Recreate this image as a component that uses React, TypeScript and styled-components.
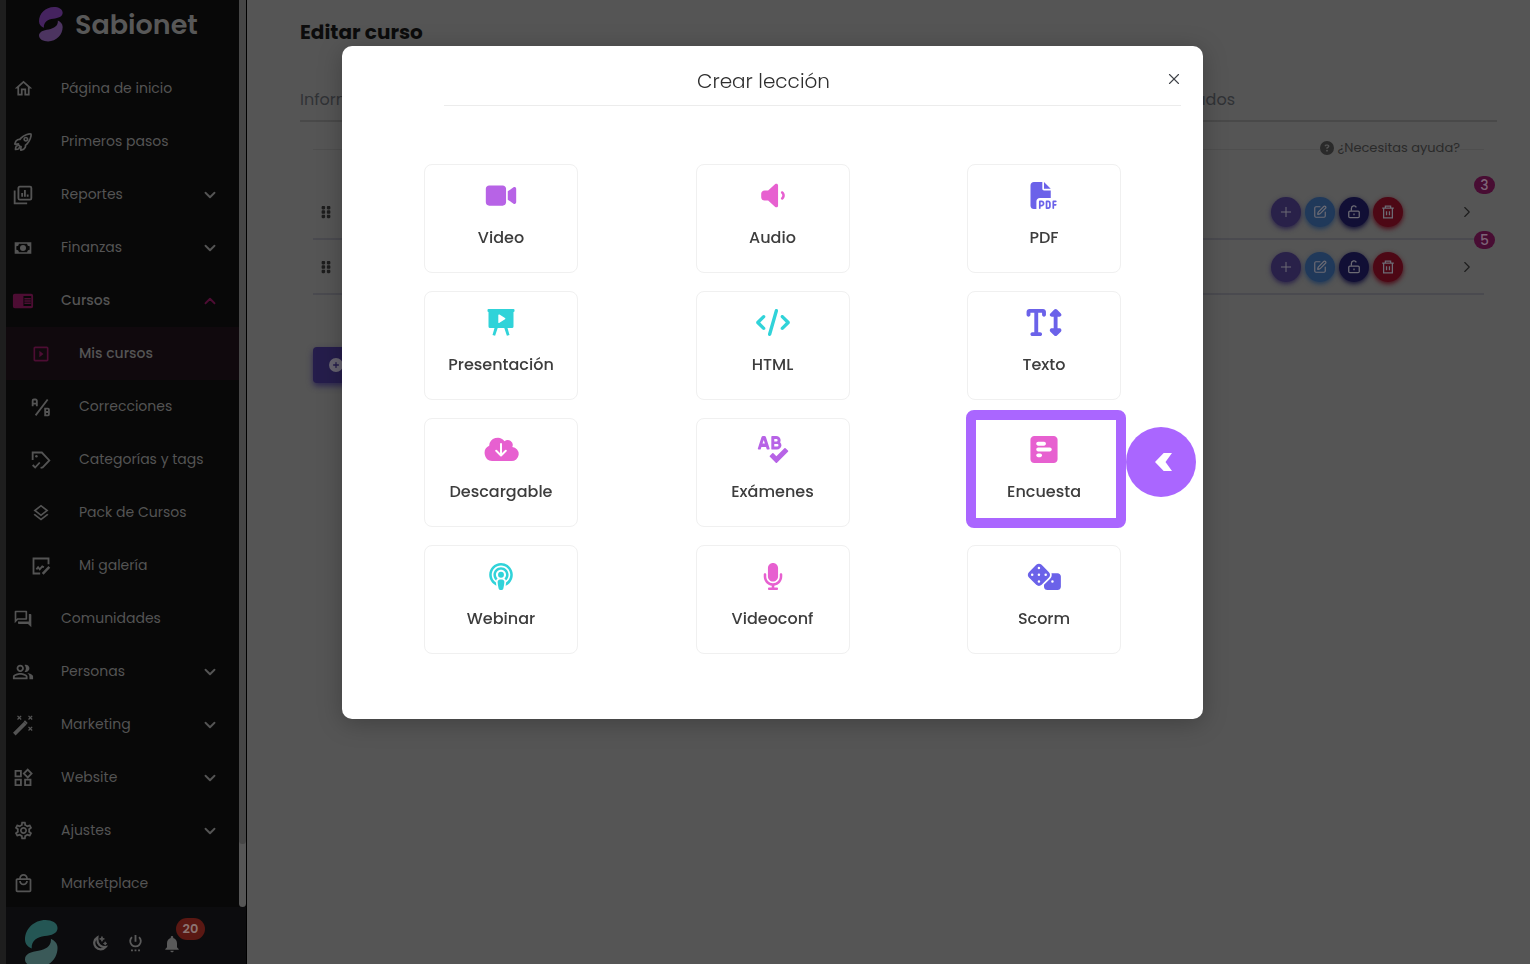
import React from 'react';
import styled, { createGlobalStyle } from 'styled-components';
import {
  MdOutlineHome, MdOutlineSlideshow, MdOutlineLayers, MdOutlineForum, MdOutlinePeopleAlt,
  MdOutlineSettings, MdOutlineLocalMall, MdNotifications,
} from 'react-icons/md';
import { IoRocketOutline } from 'react-icons/io5';
import { FaSpellCheck } from 'react-icons/fa';
import {
  FaVideo, FaVolumeLow, FaFilePdf, FaCode, FaTextHeight, FaSquarePollHorizontal,
  FaPodcast, FaMicrophone, FaDice, FaCircleQuestion, FaCirclePlus, FaGripVertical,
} from 'react-icons/fa6';
import { ChevronDown, ChevronUp, ChevronRight, X, Plus, SquarePen } from 'lucide-react';

const GlobalStyle = createGlobalStyle`
  * { box-sizing: border-box; }
  body {
    margin: 0;
    background: #555555;
    font-family: Poppins, Inter, "Liberation Sans", sans-serif;
    overflow: hidden;
  }
  button { font: inherit; color: inherit; cursor: pointer; }
  a { color: inherit; text-decoration: none; }
  ul { list-style: none; margin: 0; padding: 0; }
`;

/* ---------- drawn icons ---------- */

type IconProps = { size?: number };

const Line = ({ size = 20, children }: IconProps & { children: React.ReactNode }) => (
  <svg width={size} height={size} viewBox="0 0 24 24" fill="none" stroke="currentColor" strokeWidth="2.2" aria-hidden="true">
    {children}
  </svg>
);

const ReportsIcon = () => (
  <Line>
    <rect x="6.500" y="2" width="15.500" height="15.500" rx="1.500" />
    <path d="M2 6.500v15.500h15M11 14V9.500M14.300 14V6M17.600 14v-2.500" />
  </Line>
);
const FinanceIcon = () => (
  <Line>
    <path fill="currentColor" stroke="none" fillRule="evenodd" d="M2 5h20v14H2zM7 7a3 3 0 0 1-3 3v4a3 3 0 0 1 3 3h10a3 3 0 0 1 3-3v-4a3 3 0 0 1-3-3z" />
    <circle cx="12" cy="12" r="3.600" fill="currentColor" stroke="none" />
  </Line>
);
const CoursesIcon = () => (
  <Line size={22}>
    <path fill="currentColor" stroke="none" fillRule="evenodd" d="M3 4h18a2 2 0 0 1 2 2v12a2 2 0 0 1-2 2H3a2 2 0 0 1-2-2V6a2 2 0 0 1 2-2zm9.500 2.500v11H21v-11z" />
    <path strokeWidth="1.500" d="M13.500 9.500h7M13.500 12h7M13.500 14.500h7" />
  </Line>
);
const GradingIcon = () => (
  <Line>
    <path d="M2 11V4.500A1.500 1.500 0 0 1 3.500 3h2A1.500 1.500 0 0 1 7 4.500V11M2 8h5M5.500 22 20 3" />
    <path d="M17 14h3.500a1 1 0 0 1 1 1v6a1 1 0 0 1-1 1H17zM17 18h4.500" />
  </Line>
);
const TagsIcon = () => (
  <Line>
    <path d="M2 12V3h11l9 9.500-8 8.500-2.500.5M2 18l3 3 5.500-6" />
    <circle cx="6.500" cy="7.500" r="1.500" fill="currentColor" stroke="none" />
  </Line>
);
const GalleryIcon = () => (
  <Line>
    <path d="M11 21H3V3h18v7M6.500 16l2-2.500 2 2.500 3-3.500 2 1" />
    <path strokeWidth="3" d="m14 21.500 8-8.500" />
  </Line>
);
const WandIcon = () => (
  <Line size={22}>
    <path strokeWidth="4" d="M2.500 22 14.500 10" />
    <path strokeWidth="2" d="m13.500 7.500 3 3" />
    <path strokeWidth="1.400" d="m6 2 4 4M10 2 6 6M18 2l4 4M22 2l-4 4M18 14l4 4M22 14l-4 4" />
  </Line>
);
const WebsiteIcon = () => (
  <Line>
    <path d="M3 3.500h6.500V10H3zM3 14h6.500v6.500H3zM14.500 14H21v6.500h-6.500zM17.700 2l4.600 4.700-4.600 4.700L13 6.700z" />
  </Line>
);
const MoonIcon = () => (
  <Line size={17}>
    <path strokeWidth="3.200" d="M9 3.500A9 9 0 1 0 20.500 17C14 18 8 13 9 3.500z" />
    <path strokeWidth="1" fill="currentColor" d="m15.500 2 1 2.500 2.500 1-2.500 1-1 2.500-1-2.500-2.500-1 2.500-1zM20 9.500l.8 1.700 1.700.8-1.700.8-.8 1.700-.8-1.700-1.700-.8 1.700-.8z" />
  </Line>
);
const PowerIcon = () => (
  <Line size={17}>
    <path strokeWidth="2.600" d="M12 0v9.500M7 3a7.500 7.500 0 1 0 10 0" />
    <path strokeWidth="2.600" strokeDasharray="2.600 2.400" d="M5.700 21.700h13" />
  </Line>
);
const UnlockIcon = () => (
  <Line size={14}>
    <rect x="3" y="10.500" width="18" height="11" rx="2" />
    <path d="M7.500 10V6a4.500 4.500 0 0 1 8.500-2M12 14.500v3" />
  </Line>
);
const TrashIcon = () => (
  <Line size={14}>
    <path d="M2 5.500h20M7.500 5V2h9v3M4.500 6v16h15V6M9.500 10.500v7M14.500 10.500v7" />
  </Line>
);
const PresentationIcon = () => (
  <svg viewBox="0 0 27 27" fill="currentColor" aria-hidden="true">
    <path fillRule="evenodd" d="M1 0h25a1 1 0 0 1 1 1v1a1 1 0 0 1-1 1v14.500a1.500 1.500 0 0 1-1.500 1.500H20l2 7-2.600.8L16.800 19h-6.600l-2.600 7.800L5 26l2-7H2.500A1.500 1.500 0 0 1 1 17.500V3a1 1 0 0 1-1-1V1a1 1 0 0 1 1-1zm9.800 6v7.400q.2.900 1.200.4l5.500-3.500q.7-.6 0-1.200L12 5.600q-1-.5-1.200.4z" />
  </svg>
);
const CloudIcon = () => (
  <svg viewBox="0 -1 34 27" aria-hidden="true">
    <path fill="currentColor" d="M8 24a8 8 0 0 1-2.800-15.200V8.500A8.500 8.500 0 0 1 20.500 4.200a5 5 0 0 1 7.800 5.800A7 7 0 0 1 27 24z" />
    <path fill="none" stroke="#fff" strokeWidth="2" strokeLinecap="round" strokeLinejoin="round" d="M17 7v11M12.200 13.800 17 18.500l4.800-4.700" />
  </svg>
);
const BrandMark = ({ top, bottom, width }: { top: string; bottom: string; width: number }) => (
  <svg width={width} viewBox="0 0 74 106" aria-hidden="true">
    <path fill={top} d="M15 64C6 60 0 54 0 44C0 20 20 0 46 0C60 0 73 6 73 18C73 30 60 35 44 36C28 38 14 46 15 64Z" />
    <path fill={bottom} d="M58 42C66 46 73 52 73 62C73 86 54 106 28 106C14 106 0 100 0 88C0 76 14 71 30 69C46 67 60 58 58 42Z" />
  </svg>
);

/* ---------- sidebar ---------- */

const Shell = styled.div`
  display: grid;
  grid-template-columns: 247px 1fr;
  height: 100vh;
`;
const Sidebar = styled.aside`
  display: flex;
  flex-direction: column;
  min-height: 0;
  border-left: 6px solid #1e1e1e;
  border-right: 1px solid #000;
  background: #080808;
  color: #545454;
`;
const NavArea = styled.div`
  display: flex;
  flex: 1;
  min-height: 0;
`;
const Nav = styled.nav`
  flex: 1;
  overflow: hidden;
`;
const Track = styled.div`
  width: 7px;
  background: #565656;
  border-radius: 0 0 4px 4px;
`;
const Thumb = styled.div`
  height: 93%;
  background: #464646;
  border-radius: 0 0 4px 4px;
`;
const Brand = styled.a`
  display: flex;
  align-items: center;
  gap: 12px;
  height: 62px;
  padding: 0 0 13px 33px;
  font-size: 27px;
  font-weight: 600;
  line-height: 32px;
  color: #585858;
`;
const NavLink = styled.a<{ $sub?: boolean; $current?: boolean; $open?: boolean }>`
  display: flex;
  align-items: center;
  gap: 27px;
  height: 53px;
  padding: 0 20px 0 ${p => (p.$sub ? 24 : 6)}px;
  font-size: 14px;
  font-weight: ${p => (p.$current || p.$open ? 500 : 400)};
  background: ${p => (p.$current ? '#10090d' : 'transparent')};
`;
const NavIcon = styled.span<{ $accent?: boolean }>`
  display: flex;
  justify-content: center;
  width: 22px;
  font-size: 20px;
  color: ${p => (p.$accent ? '#4d0d33' : '#545454')};
`;
const RocketIcon = styled(IoRocketOutline)`
  path { stroke-width: 44px; }
`;
const NavText = styled.span`
  flex: 1;
  white-space: nowrap;
`;
const Footer = styled.footer`
  display: flex;
  align-items: flex-start;
  height: 57px;
  padding: 13px 0 0 19px;
  background: #0c0c0e;
  overflow: hidden;
`;
const FooterTools = styled.div`
  display: flex;
  align-items: center;
  gap: 19px;
  margin: 15px 0 0 33px;
`;
const ToolButton = styled.button`
  display: flex;
  position: relative;
  align-items: center;
  justify-content: center;
  width: 17px;
  height: 17px;
  padding: 0;
  border: 0;
  background: none;
  color: #5a5a5a;
  font-size: 20px;
  svg { flex: none; }
`;
const ToolBadge = styled.span`
  position: absolute;
  left: 13px;
  top: -17px;
  width: 29px;
  height: 22px;
  border-radius: 11px;
  background: #5a1813;
  color: #8b7472;
  font-size: 13px;
  font-weight: 600;
  line-height: 22px;
  text-align: center;
`;

type Entry = { label: string; icon: React.ReactNode; sub?: boolean; current?: boolean; open?: boolean; more?: boolean };

const entries: Entry[] = [
  { label: 'Página de inicio', icon: <MdOutlineHome size={21} /> },
  { label: 'Primeros pasos', icon: <RocketIcon /> },
  { label: 'Reportes', icon: <ReportsIcon />, more: true },
  { label: 'Finanzas', icon: <FinanceIcon />, more: true },
  { label: 'Cursos', icon: <CoursesIcon />, open: true },
  { label: 'Mis cursos', icon: <MdOutlineSlideshow />, sub: true, current: true },
  { label: 'Correcciones', icon: <GradingIcon />, sub: true },
  { label: 'Categorías y tags', icon: <TagsIcon />, sub: true },
  { label: 'Pack de Cursos', icon: <MdOutlineLayers />, sub: true },
  { label: 'Mi galería', icon: <GalleryIcon />, sub: true },
  { label: 'Comunidades', icon: <MdOutlineForum /> },
  { label: 'Personas', icon: <MdOutlinePeopleAlt size={22} />, more: true },
  { label: 'Marketing', icon: <WandIcon />, more: true },
  { label: 'Website', icon: <WebsiteIcon />, more: true },
  { label: 'Ajustes', icon: <MdOutlineSettings size={21} />, more: true },
  { label: 'Marketplace', icon: <MdOutlineLocalMall size={21} /> },
];

/* ---------- course editor ---------- */

const Main = styled.main`
  min-width: 0;
  padding: 17px 33px 0 53px;
`;
const PageTitle = styled.h1`
  margin: 0;
  font-size: 20px;
  font-weight: 700;
  line-height: 30px;
  color: #0c0c0c;
`;
const Tabs = styled.nav`
  display: flex;
  justify-content: space-between;
  margin-top: 36px;
  padding: 5px 262px 8px 0;
  border-bottom: 2px solid #494949;
  font-size: 16px;
  line-height: 24px;
  color: #303235;
`;
const Panel = styled.section`
  padding: 0 13px;
`;
const HelpRow = styled.div`
  display: flex;
  align-items: center;
  height: 54px;
  &::before { content: ''; flex: 1; border-top: 1px solid #4e4e4e; }
  &::after { content: ''; width: 24px; border-top: 1px solid #4e4e4e; }
`;
const HelpLink = styled.a`
  display: flex;
  align-items: center;
  gap: 4px;
  padding-bottom: 2px;
  font-size: 13px;
  line-height: 20px;
  color: #2a2a2a;
`;
const Units = styled.ul`
  padding-top: 9px;
`;
const Unit = styled.li`
  display: flex;
  position: relative;
  align-items: center;
  height: 55px;
  padding: 0 8px 0 6px;
  border-bottom: 2px solid #4a4a4f;
  color: #1d1d1d;
`;
const Actions = styled.div`
  display: flex;
  gap: 4px;
  margin: 0 55px 0 auto;
`;
const Round = styled.button<{ $tone: string }>`
  display: flex;
  align-items: center;
  justify-content: center;
  width: 30px;
  height: 30px;
  padding: 0;
  border: 0;
  border-radius: 50%;
  background: ${p => p.$tone};
  box-shadow: 0 2px 5px ${p => p.$tone};
  color: #6c6b74;
`;
const Plain = styled.button`
  display: flex;
  padding: 0;
  border: 0;
  background: none;
`;
const Count = styled.span`
  position: absolute;
  right: -11px;
  top: -9px;
  width: 21px;
  height: 18px;
  border-radius: 9px;
  background: #480d33;
  color: #7d6577;
  font-size: 14px;
  font-weight: 500;
  line-height: 18px;
  text-align: center;
`;
const AddUnit = styled.button`
  display: flex;
  align-items: center;
  gap: 8px;
  height: 36px;
  margin-top: 52px;
  padding: 0 16px;
  border: 0;
  border-radius: 4px;
  background: #251d4b;
  box-shadow: 0 3px 6px #2c2650;
  color: #66636f;
  font-size: 14px;
`;

/* ---------- dialog ---------- */

const Overlay = styled.div`
  display: flex;
  position: fixed;
  inset: 0;
  align-items: flex-start;
  justify-content: center;
  padding: 46px 0 0 15px;
`;
const Dialog = styled.section`
  position: relative;
  width: 861px;
  max-width: 100%;
  padding-bottom: 65px;
  border-radius: 10px;
  background: #fff;
  box-shadow: 0 4px 24px rgba(0, 0, 0, 0.25);
`;
const DialogTitle = styled.h2`
  margin: 0;
  padding: 20px 18px 9px 0;
  font-size: 20px;
  font-weight: 300;
  line-height: 30px;
  text-align: center;
  color: #2e2e2e;
`;
const Divider = styled.hr`
  margin: 0 22px 0 102px;
  border: 0;
  border-top: 1px solid #ececec;
`;
const Close = styled.button`
  display: flex;
  position: absolute;
  right: 20px;
  top: 24px;
  padding: 0;
  border: 0;
  background: none;
  color: #3f4248;
`;
const Kinds = styled.div`
  display: grid;
  grid-template-columns: repeat(3, 154px);
  justify-content: space-between;
  row-gap: 18px;
  padding: 58px 82px 0 82px;
`;
const Slot = styled.div`
  position: relative;
`;
const Kind = styled.button`
  display: flex;
  flex-direction: column;
  align-items: center;
  gap: 17px;
  width: 100%;
  height: 109px;
  padding: 17px 0 0;
  border: 1px solid #f0f0f0;
  border-radius: 8px;
  background: #fff;
  color: #3d3d3d;
  font-size: 16px;
  font-weight: 500;
  line-height: 24px;
`;
const KindIcon = styled.span<{ $tone: string; $tall?: boolean }>`
  display: flex;
  align-items: center;
  justify-content: center;
  height: 27px;
  color: ${p => p.$tone};
  svg {
    flex: none;
    width: 40px;
    height: ${p => (p.$tall ? 31 : 27)}px;
  }
`;
const Marker = styled.span`
  position: absolute;
  inset: -8px -5px -1px -1px;
  border: 10px solid #aa66ff;
  border-radius: 8px;
  pointer-events: none;
`;
const Pointer = styled.span`
  display: flex;
  position: absolute;
  left: calc(100% + 5px);
  top: 9px;
  align-items: center;
  justify-content: center;
  width: 70px;
  height: 70px;
  padding-left: 4px;
  border-radius: 50%;
  background: #aa66ff;
`;

const purple = '#b763e6';
const pink = '#e760d0';
const indigo = '#6b62e9';
const teal = '#30d3d9';

const kinds = [
  { label: 'Video', tone: purple, icon: <FaVideo /> },
  { label: 'Audio', tone: pink, icon: <FaVolumeLow /> },
  { label: 'PDF', tone: indigo, icon: <FaFilePdf /> },
  { label: 'Presentación', tone: teal, icon: <PresentationIcon /> },
  { label: 'HTML', tone: teal, icon: <FaCode /> },
  { label: 'Texto', tone: indigo, icon: <FaTextHeight />, tall: true },
  { label: 'Descargable', tone: pink, icon: <CloudIcon /> },
  { label: 'Exámenes', tone: purple, icon: <FaSpellCheck /> },
  { label: 'Encuesta', tone: pink, icon: <FaSquarePollHorizontal />, tall: true, marked: true },
  { label: 'Webinar', tone: teal, icon: <FaPodcast /> },
  { label: 'Videoconf', tone: pink, icon: <FaMicrophone /> },
  { label: 'Scorm', tone: indigo, icon: <FaDice /> },
];

export default function App() {
  return (
    <>
      <GlobalStyle />
      <Shell>
        <Sidebar>
          <NavArea>
            <Nav aria-label="Principal">
              <Brand href="#">
                <BrandMark width={24} top="#45235f" bottom="#4c3460" />
                Sabionet
              </Brand>
              <ul>
                {entries.map(e => (
                  <li key={e.label}>
                    <NavLink href="#" $sub={e.sub} $current={e.current} $open={e.open}>
                      <NavIcon $accent={e.current || e.open}>{e.icon}</NavIcon>
                      <NavText>{e.label}</NavText>
                      {e.more && <ChevronDown size={18} strokeWidth={2.5} />}
                      {e.open && <ChevronUp size={18} strokeWidth={2.5} color="#4d0d33" />}
                    </NavLink>
                  </li>
                ))}
              </ul>
            </Nav>
            <Track><Thumb /></Track>
          </NavArea>
          <Footer>
            <BrandMark width={33} top="#245654" bottom="#3a5958" />
            <FooterTools>
              <ToolButton aria-label="Modo oscuro"><MoonIcon /></ToolButton>
              <ToolButton aria-label="Salir"><PowerIcon /></ToolButton>
              <ToolButton aria-label="Notificaciones">
                <MdNotifications />
                <ToolBadge>20</ToolBadge>
              </ToolButton>
            </FooterTools>
          </Footer>
        </Sidebar>

        <Main>
          <PageTitle>Editar curso</PageTitle>
          <Tabs aria-label="Curso">
            <a href="#">Información</a>
            <a href="#">Resultados</a>
          </Tabs>
          <Panel>
            <HelpRow>
              <HelpLink href="#"><FaCircleQuestion size={14} />¿Necesitas ayuda?</HelpLink>
            </HelpRow>
            <Units>
              {[3, 5].map(n => (
                <Unit key={n}>
                  <FaGripVertical size={14} />
                  <Actions>
                    <Round $tone="#292149" aria-label="Agregar"><Plus size={16} strokeWidth={1.5} /></Round>
                    <Round $tone="#20395a" aria-label="Editar"><SquarePen size={14} /></Round>
                    <Round $tone="#110f35" aria-label="Desbloquear"><UnlockIcon /></Round>
                    <Round $tone="#4d0815" aria-label="Eliminar"><TrashIcon /></Round>
                  </Actions>
                  <Plain aria-label="Abrir"><ChevronRight size={18} strokeWidth={1.5} /></Plain>
                  <Count>{n}</Count>
                </Unit>
              ))}
            </Units>
            <AddUnit aria-label="Agregar módulo"><FaCirclePlus size={14} /></AddUnit>
          </Panel>
        </Main>
      </Shell>

      <Overlay>
        <Dialog role="dialog" aria-modal="true" aria-labelledby="dialog-title">
          <DialogTitle id="dialog-title">Crear lección</DialogTitle>
          <Close aria-label="Cerrar"><X size={18} strokeWidth={1.5} /></Close>
          <Divider />
          <Kinds>
            {kinds.map(k => (
              <Slot key={k.label}>
                <Kind>
                  <KindIcon $tone={k.tone} $tall={k.tall}>{k.icon}</KindIcon>
                  {k.label}
                </Kind>
                {k.marked && (
                  <>
                    <Marker />
                    <Pointer>
                      <svg width="17" height="18" viewBox="0 0 17 18" aria-hidden="true">
                        <path fill="#fff" d="M8.700 0H17l-6.500 9 6.500 9H8.700L0 9z" />
                      </svg>
                    </Pointer>
                  </>
                )}
              </Slot>
            ))}
          </Kinds>
        </Dialog>
      </Overlay>
    </>
  );
}
